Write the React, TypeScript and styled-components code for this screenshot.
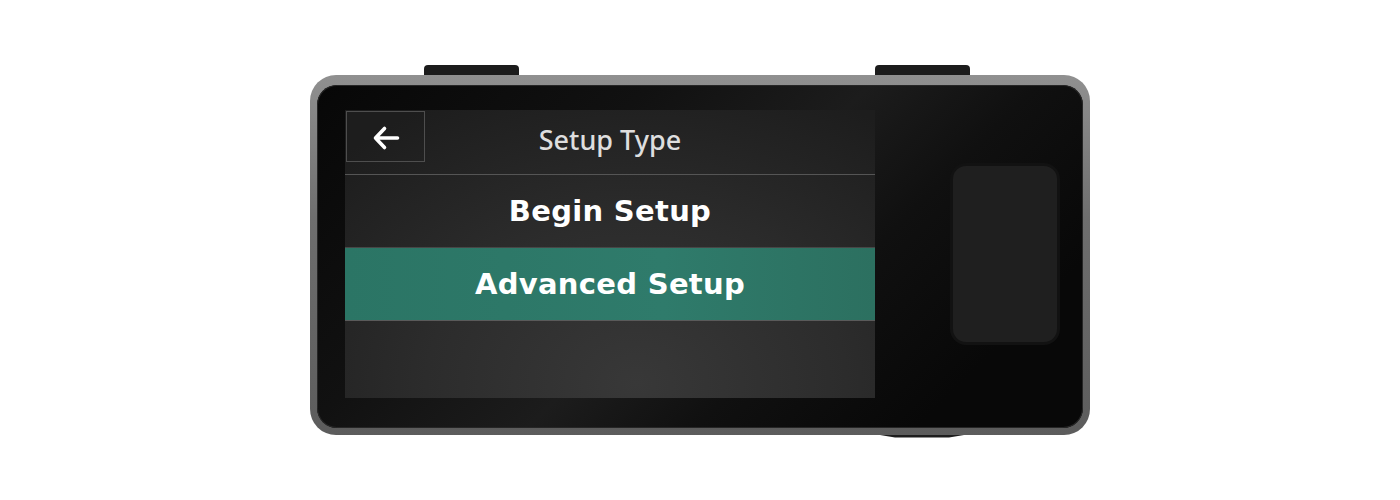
import React from "react";
import styled, { createGlobalStyle } from "styled-components";

const Global = createGlobalStyle`
  html, body { margin: 0; padding: 0; background: #ffffff; }
  #root { width: 1400px; height: 500px; }
`;

const Page = styled.div`
  width: 1400px;
  height: 500px;
  display: flex;
  align-items: center;
  justify-content: center;
  padding-top: 2px;
  box-sizing: border-box;
`;

const Device = styled.div`
  display: flex;
  flex-direction: column;
  width: 780px;
`;

const TopButtons = styled.div`
  display: flex;
  height: 10px;
  padding-left: 114px;
  gap: 356px;
`;

const TopButton = styled.div`
  width: 95px;
  height: 10px;
  background: #1c1c1c;
  border-radius: 4px 4px 0 0;
`;

const Body = styled.div`
  height: 360px;
  border-radius: 26px;
  background: linear-gradient(180deg, #909090 0%, #6e6e6e 40%, #5c5c5c 100%);
  padding: 10px 7px 7px 7px;
  box-sizing: border-box;
  display: flex;
`;

const Face = styled.div`
  flex: 1;
  border-radius: 20px;
  background: linear-gradient(135deg, #070707 0%, #111111 30%, #1c1c1c 50%, #101010 65%, #080808 85%);
  box-shadow: inset 0 0 0 1px #262626;
  display: flex;
  padding: 25px 0 0 28px;
  box-sizing: border-box;
`;

const Screen = styled.div`
  width: 530px;
  height: 288px;
  background: radial-gradient(ellipse 420px 320px at 55% 95%, #383838 0%, #2c2c2c 50%, #1d1d1d 100%);
  display: flex;
  flex-direction: column;
  font-family: "DejaVu Sans", "Noto Sans", sans-serif;
`;

const Header = styled.div`
  height: 64px;
  display: grid;
  grid-template-columns: 80px 1fr 80px;
  border-bottom: 1px solid #555555;
  box-sizing: content-box;
`;

const BackButton = styled.div`
  margin: 1px 0 0 1px;
  width: 79px;
  height: 51px;
  box-sizing: border-box;
  border: 1px solid #4e4e4e;
  padding-top: 3px;
  display: flex;
  align-items: center;
  justify-content: center;
  color: #ffffff;
`;

const Title = styled.div`
  display: flex;
  align-items: center;
  justify-content: center;
  padding-bottom: 5px;
  color: #dedede;
  font-family: "Noto Sans", "Open Sans", sans-serif;
  font-weight: 500;
  font-size: 27px;
`;

const Row = styled.div<{ $active?: boolean }>`
  height: 72px;
  border-bottom: 1px solid ${(p) => (p.$active ? "#5a5a5a" : "#474747")};
  background: ${(p) =>
    p.$active ? "linear-gradient(90deg, #2b7565 0%, #2f7b6b 60%, #2c7060 100%)" : "transparent"};
  display: flex;
  align-items: center;
  justify-content: center;
  color: #ffffff;
  font-weight: 700;
  font-size: 29px;
  letter-spacing: 0.3px;
`;

const Side = styled.div`
  flex: 1;
  display: flex;
  padding: 53px 0 0 75px;
`;

const Sensor = styled.div`
  width: 110px;
  height: 182px;
  box-sizing: border-box;
  border-radius: 16px;
  border: 3px solid #121212;
  background: #1f1f1f;
`;

const BottomRow = styled.div`
  display: flex;
  padding-left: 567px;
`;

const BottomButton = styled.div`
  width: 90px;
  height: 3px;
  background: #1e1e1e;
  clip-path: polygon(0 0, 100% 0, 80% 100%, 20% 100%);
`;

const Arrow = () => (
  <svg width="28" height="26" viewBox="0 0 28 26" fill="none">
    <path
      d="M25.5 13H3.5M12.5 3.5L3.5 13l9 9.5"
      stroke="#ffffff"
      strokeWidth="3.6"
      strokeLinecap="round"
      strokeLinejoin="round"
    />
  </svg>
);

export default function App() {
  return (
    <>
      <Global />
      <Page>
        <Device>
          <TopButtons>
            <TopButton />
            <TopButton />
          </TopButtons>
          <Body>
            <Face>
              <Screen>
                <Header>
                  <BackButton>
                    <Arrow />
                  </BackButton>
                  <Title>Setup Type</Title>
                  <div />
                </Header>
                <Row>Begin Setup</Row>
                <Row $active>Advanced Setup</Row>
              </Screen>
              <Side>
                <Sensor />
              </Side>
            </Face>
          </Body>
          <BottomRow>
            <BottomButton />
          </BottomRow>
        </Device>
      </Page>
    </>
  );
}
